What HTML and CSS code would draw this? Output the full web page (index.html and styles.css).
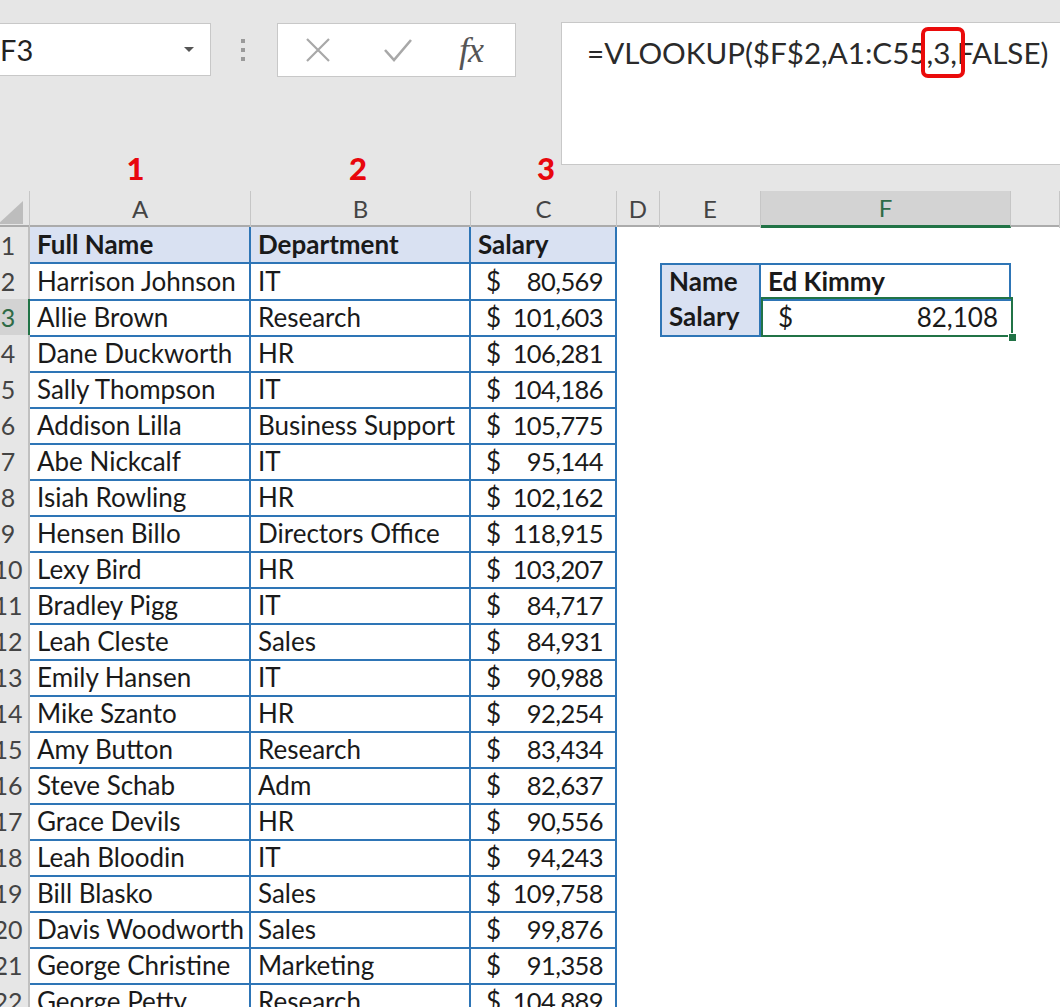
FILE: index.html
```html
<!DOCTYPE html>
<html>
<head>
<meta charset="utf-8">
<link rel="stylesheet" href="styles.css">
</head>
<body>
<div class="top">
  <div class="left">
    <div class="toolbar">
      <div class="namebox"><span>F3</span><span class="dd"></span></div>
      <div class="grip"><i></i><i></i><i></i></div>
      <div class="fxbox">
        <svg class="ic-x" width="26" height="26" viewBox="0 0 26 26"><path d="M2 2 L24 24 M24 2 L2 24" stroke="#a8a8a8" stroke-width="2.2" fill="none"/></svg>
        <svg class="ic-ok" width="30" height="26" viewBox="0 0 30 26"><path d="M2 13 L11 23 L28 3" stroke="#a8a8a8" stroke-width="2.6" fill="none"/></svg>
        <span class="ic-fx">fx</span>
      </div>
    </div>
    <div class="colnums"><span></span><span>1</span><span>2</span><span>3</span></div>
  </div>
  <div class="formula">=VLOOKUP($F$2,A1:C55<span class="hl">,3,</span>FALSE)</div>
</div>

<div class="sheet">
  <div class="row hdr">
    <div class="corner"><svg width="26" height="24" viewBox="0 0 26 24"><path d="M25 0 L25 23 L0 23 Z" fill="#bdbdbd"/></svg></div>
    <div class="ch">A</div><div class="ch">B</div><div class="ch">C</div><div class="ch">D</div><div class="ch">E</div><div class="ch sel">F</div><div class="ch"></div>
  </div>
  <div class="row">
    <div class="rh">1</div><div class="c t hd">Full Name</div><div class="c t hd">Department</div><div class="c t hd">Salary</div><div></div><div></div><div></div><div></div>
  </div>
  <div class="row">
    <div class="rh">2</div><div class="c t">Harrison Johnson</div><div class="c t">IT</div><div class="m t"><span>$</span><span>80,569</span></div><div></div><div class="c k1 kh">Name</div><div class="c k2 kb">Ed Kimmy</div><div></div>
  </div>
  <div class="row">
    <div class="rh rsel">3</div><div class="c t">Allie Brown</div><div class="c t">Research</div><div class="m t"><span>$</span><span>101,603</span></div><div></div><div class="c k3 kh">Salary</div><div class="m k4"><span>$</span><span>82,108</span><div class="selbox"></div><div class="handle"></div></div><div></div>
  </div>
  <div class="row"><div class="rh">4</div><div class="c t">Dane Duckworth</div><div class="c t">HR</div><div class="m t"><span>$</span><span>106,281</span></div></div>
  <div class="row"><div class="rh">5</div><div class="c t">Sally Thompson</div><div class="c t">IT</div><div class="m t"><span>$</span><span>104,186</span></div></div>
  <div class="row"><div class="rh">6</div><div class="c t">Addison Lilla</div><div class="c t">Business Support</div><div class="m t"><span>$</span><span>105,775</span></div></div>
  <div class="row"><div class="rh">7</div><div class="c t">Abe Nickcalf</div><div class="c t">IT</div><div class="m t"><span>$</span><span>95,144</span></div></div>
  <div class="row"><div class="rh">8</div><div class="c t">Isiah Rowling</div><div class="c t">HR</div><div class="m t"><span>$</span><span>102,162</span></div></div>
  <div class="row"><div class="rh">9</div><div class="c t">Hensen Billo</div><div class="c t">Directors Office</div><div class="m t"><span>$</span><span>118,915</span></div></div>
  <div class="row"><div class="rh">10</div><div class="c t">Lexy Bird</div><div class="c t">HR</div><div class="m t"><span>$</span><span>103,207</span></div></div>
  <div class="row"><div class="rh">11</div><div class="c t">Bradley Pigg</div><div class="c t">IT</div><div class="m t"><span>$</span><span>84,717</span></div></div>
  <div class="row"><div class="rh">12</div><div class="c t">Leah Cleste</div><div class="c t">Sales</div><div class="m t"><span>$</span><span>84,931</span></div></div>
  <div class="row"><div class="rh">13</div><div class="c t">Emily Hansen</div><div class="c t">IT</div><div class="m t"><span>$</span><span>90,988</span></div></div>
  <div class="row"><div class="rh">14</div><div class="c t">Mike Szanto</div><div class="c t">HR</div><div class="m t"><span>$</span><span>92,254</span></div></div>
  <div class="row"><div class="rh">15</div><div class="c t">Amy Button</div><div class="c t">Research</div><div class="m t"><span>$</span><span>83,434</span></div></div>
  <div class="row"><div class="rh">16</div><div class="c t">Steve Schab</div><div class="c t">Adm</div><div class="m t"><span>$</span><span>82,637</span></div></div>
  <div class="row"><div class="rh">17</div><div class="c t">Grace Devils</div><div class="c t">HR</div><div class="m t"><span>$</span><span>90,556</span></div></div>
  <div class="row"><div class="rh">18</div><div class="c t">Leah Bloodin</div><div class="c t">IT</div><div class="m t"><span>$</span><span>94,243</span></div></div>
  <div class="row"><div class="rh">19</div><div class="c t">Bill Blasko</div><div class="c t">Sales</div><div class="m t"><span>$</span><span>109,758</span></div></div>
  <div class="row"><div class="rh">20</div><div class="c t">Davis Woodworth</div><div class="c t">Sales</div><div class="m t"><span>$</span><span>99,876</span></div></div>
  <div class="row"><div class="rh">21</div><div class="c t">George Christine</div><div class="c t">Marketing</div><div class="m t"><span>$</span><span>91,358</span></div></div>
  <div class="row"><div class="rh">22</div><div class="c t">George Petty</div><div class="c t">Research</div><div class="m t"><span>$</span><span>104,889</span></div></div>
</div>
</body>
</html>
```
FILE: styles.css
```css
* { box-sizing: border-box; }
html, body { margin: 0; padding: 0; }
body {
  width: 1060px;
  height: 1007px;
  overflow: hidden;
  background: #e6e6e6;
  font-family: Lato, "Liberation Sans", sans-serif;
  color: #1a1a1a;
}
.top {
  display: grid;
  grid-template-columns: 561px 1fr;
  height: 191px;
}
.left { display: flex; flex-direction: column; }
.toolbar {
  display: flex;
  align-items: center;
  margin-top: 23px;
  height: 53px;
}
.namebox {
  width: 211px;
  height: 53px;
  background: #fff;
  border: 1px solid #c8c8c8;
  border-left: none;
  display: flex;
  align-items: center;
  justify-content: space-between;
  padding-right: 16px;
  font-size: 29px;
  color: #222;
}
.dd {
  width: 0; height: 0;
  border-left: 5px solid transparent;
  border-right: 5px solid transparent;
  border-top: 5px solid #555;
}
.grip {
  margin-left: 30px;
  display: flex;
  flex-direction: column;
  gap: 5px;
}
.grip i { display: block; width: 4px; height: 4px; background: #9a9a9a; }
.fxbox {
  margin-left: 32px;
  width: 239px;
  height: 54px;
  background: #fff;
  border: 1px solid #c8c8c8;
  display: flex;
  align-items: center;
  padding-left: 27px;
}
.ic-ok { margin-left: 52px; }
.ic-fx {
  margin-left: 46px;
  font-family: "Liberation Serif", serif;
  font-style: italic;
  font-size: 36px;
  line-height: 40px;
  color: #555;
  letter-spacing: -1px;
}
.colnums {
  margin-top: auto;
  margin-bottom: 5px;
  display: grid;
  grid-template-columns: 30px 221px 220px 146px;
  height: 36px;
  line-height: 36px;
  text-align: center;
  font-weight: 900;
  font-size: 31px;
  color: #e8070d;
}
.colnums span:nth-child(2) { padding-right: 10px; }
.colnums span:nth-child(3) { padding-right: 6px; }
.colnums span:nth-child(4) { padding-left: 4px; }
.formula {
  margin-top: 22px;
  height: 143px;
  background: #fff;
  border: 1px solid #c8c8c8;
  border-right: none;
  padding: 10px 0 0 25px;
  font-size: 29.6px;
  line-height: 40px;
  color: #2a2a2a;
  white-space: nowrap;
}
.hl { position: relative; }
.hl::after {
  content: "";
  position: absolute;
  left: -5px;
  right: -8px;
  top: -8px;
  bottom: -8px;
  border: 4px solid #ea0b0b;
  border-radius: 7px;
}

.sheet { background: #fff; }
.row {
  display: grid;
  grid-template-columns: 42px 221px 220px 146px 43px 101px 250px 1fr;
  height: 36px;
  margin-left: -12px;
}
.hdr {
  background: #e6e6e6;
  border-bottom: 2px solid #ababab;
}
.corner {
  border-right: 1px solid #c6c6c6;
  display: flex;
  align-items: flex-end;
  justify-content: flex-end;
  padding: 0 5px 3px 0;
}
.ch {
  border-right: 1px solid #c6c6c6;
  text-align: center;
  font-size: 24px;
  line-height: 36px;
  color: #444;
  margin-top: 0;
}
.ch.sel {
  background: #d3d3d3;
  color: #2f6b46;
  border-bottom: 3px solid #217346;
  line-height: 34px;
}
.rh {
  background: #e6e6e6;
  border-right: 2px solid #c0c0c0;
  border-bottom: 1px solid #d6d6d6;
  text-align: center;
  font-size: 25px;
  line-height: 36px;
  color: #444;
}
.rh.rsel {
  background: #d3d3d3;
  color: #2f6b46;
  border-right: 2px solid #217346;
}
.c {
  font-size: 26px;
  line-height: 36px;
  padding-left: 7px;
  white-space: nowrap;
  overflow: hidden;
}
.t {
  border-right: 2px solid #2e75b6;
  border-bottom: 2px solid #2e75b6;
}
.hd { background: #d9e1f2; font-weight: 700; line-height: 35px; }
.m {
  display: flex;
  justify-content: space-between;
  align-items: baseline;
  font-size: 26px;
  line-height: 36px;
  padding: 0 12px 0 15px;
}
.m span:last-child { font-size: 25.5px; letter-spacing: -0.6px; }
.k1 { border: 2px solid #2e75b6; background: #d9e1f2; font-weight: 700; }
.k2 { border: 2px solid #2e75b6; border-left: none; font-weight: 700; }
.k3 { border: 2px solid #2e75b6; border-top: none; background: #d9e1f2; font-weight: 700; }
.k4 { position: relative; padding: 0 13px 0 17px; }
.kh, .kb { line-height: 32px; }
.k3.kh { line-height: 34px; }
.selbox {
  position: absolute;
  left: 0; top: -2px; right: -2px; bottom: 0;
  border: 2px solid #217346;
}
.handle {
  position: absolute;
  right: -6px;
  bottom: -5px;
  width: 9px;
  height: 9px;
  background: #217346;
  border: 1px solid #fff;
}
```
